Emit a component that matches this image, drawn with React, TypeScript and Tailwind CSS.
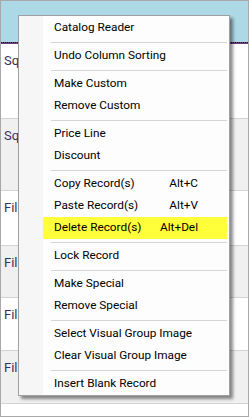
import React from 'react';

type Entry = { label: string; shortcut?: string; active?: boolean } | 'sep';

const entries: Entry[] = [
  { label: 'Catalog Reader' },
  'sep',
  { label: 'Undo Column Sorting' },
  'sep',
  { label: 'Make Custom' },
  { label: 'Remove Custom' },
  'sep',
  { label: 'Price Line' },
  { label: 'Discount' },
  'sep',
  { label: 'Copy Record(s)', shortcut: 'Alt+C' },
  { label: 'Paste Record(s)', shortcut: 'Alt+V' },
  { label: 'Delete Record(s)', shortcut: 'Alt+Del', active: true },
  'sep',
  { label: 'Lock Record' },
  'sep',
  { label: 'Make Special' },
  { label: 'Remove Special' },
  'sep',
  { label: 'Select Visual Group Image' },
  { label: 'Clear Visual Group Image' },
  'sep',
  { label: 'Insert Blank Record' },
];

const rows = [
  { h: 'h-[75px]', bg: 'bg-white', text: 'Sq' },
  { h: 'h-[72px]', bg: 'bg-[#f0f0f0]', text: 'Sq' },
  { h: 'h-[55px]', bg: 'bg-white', text: 'Fil' },
  { h: 'h-[52px]', bg: 'bg-[#f0f0f0]', text: 'Fil' },
  { h: 'h-[53px]', bg: 'bg-white', text: 'Fil' },
  { h: 'h-[53px]', bg: 'bg-[#f0f0f0]', text: 'Fil' },
  { h: 'h-[20px]', bg: 'bg-white', text: '' },
];

const App: React.FC = () => {
  return (
    <div className="relative w-[249px] h-[417px] overflow-hidden border border-[#a8a8a8] bg-white font-['Roboto',sans-serif]">
      <div className="h-[41px] bg-[#add8e6]" />
      <div className="h-[1px] bg-[repeating-linear-gradient(90deg,#111_0_1px,#7a4a8c_1px_2px)]" />
      <div className="h-[1px] bg-[#6e3d82]" />

      {rows.map((row, i) => (
        <div
          key={i}
          className={`${row.h} ${row.bg} border-b border-[#d4d4d4] pl-[3px] pt-[9px] text-[13px] leading-[16px] text-[#34345a]`}
        >
          {row.text}
        </div>
      ))}

      <div className="absolute left-[17px] top-[14px] w-[212px] flex border border-[#a0a0a0] bg-[#fdfdfd] shadow-[3px_3px_3px_rgba(0,0,0,0.45)]">
        <div className="w-[24px] shrink-0 bg-[#f6f6f6]" />
        <div className="flex-1 flex flex-col pt-[1px] mr-[2px] text-[11.8px] text-black">
          {entries.map((e, i) =>
            e === 'sep' ? (
              <div key={i} className="h-[6px] pt-[3px] pl-[8px]">
                <div className="h-[1px] bg-[#d6d6d6]" />
              </div>
            ) : (
              <div
                key={i}
                className={`h-[22px] flex items-center justify-between pl-[11px] pr-[29px] ${
                  e.active ? 'bg-[#ffff3a]' : ''
                }`}
              >
                <span>{e.label}</span>
                {e.shortcut && <span>{e.shortcut}</span>}
              </div>
            )
          )}
        </div>
      </div>
    </div>
  );
};

export default App;
